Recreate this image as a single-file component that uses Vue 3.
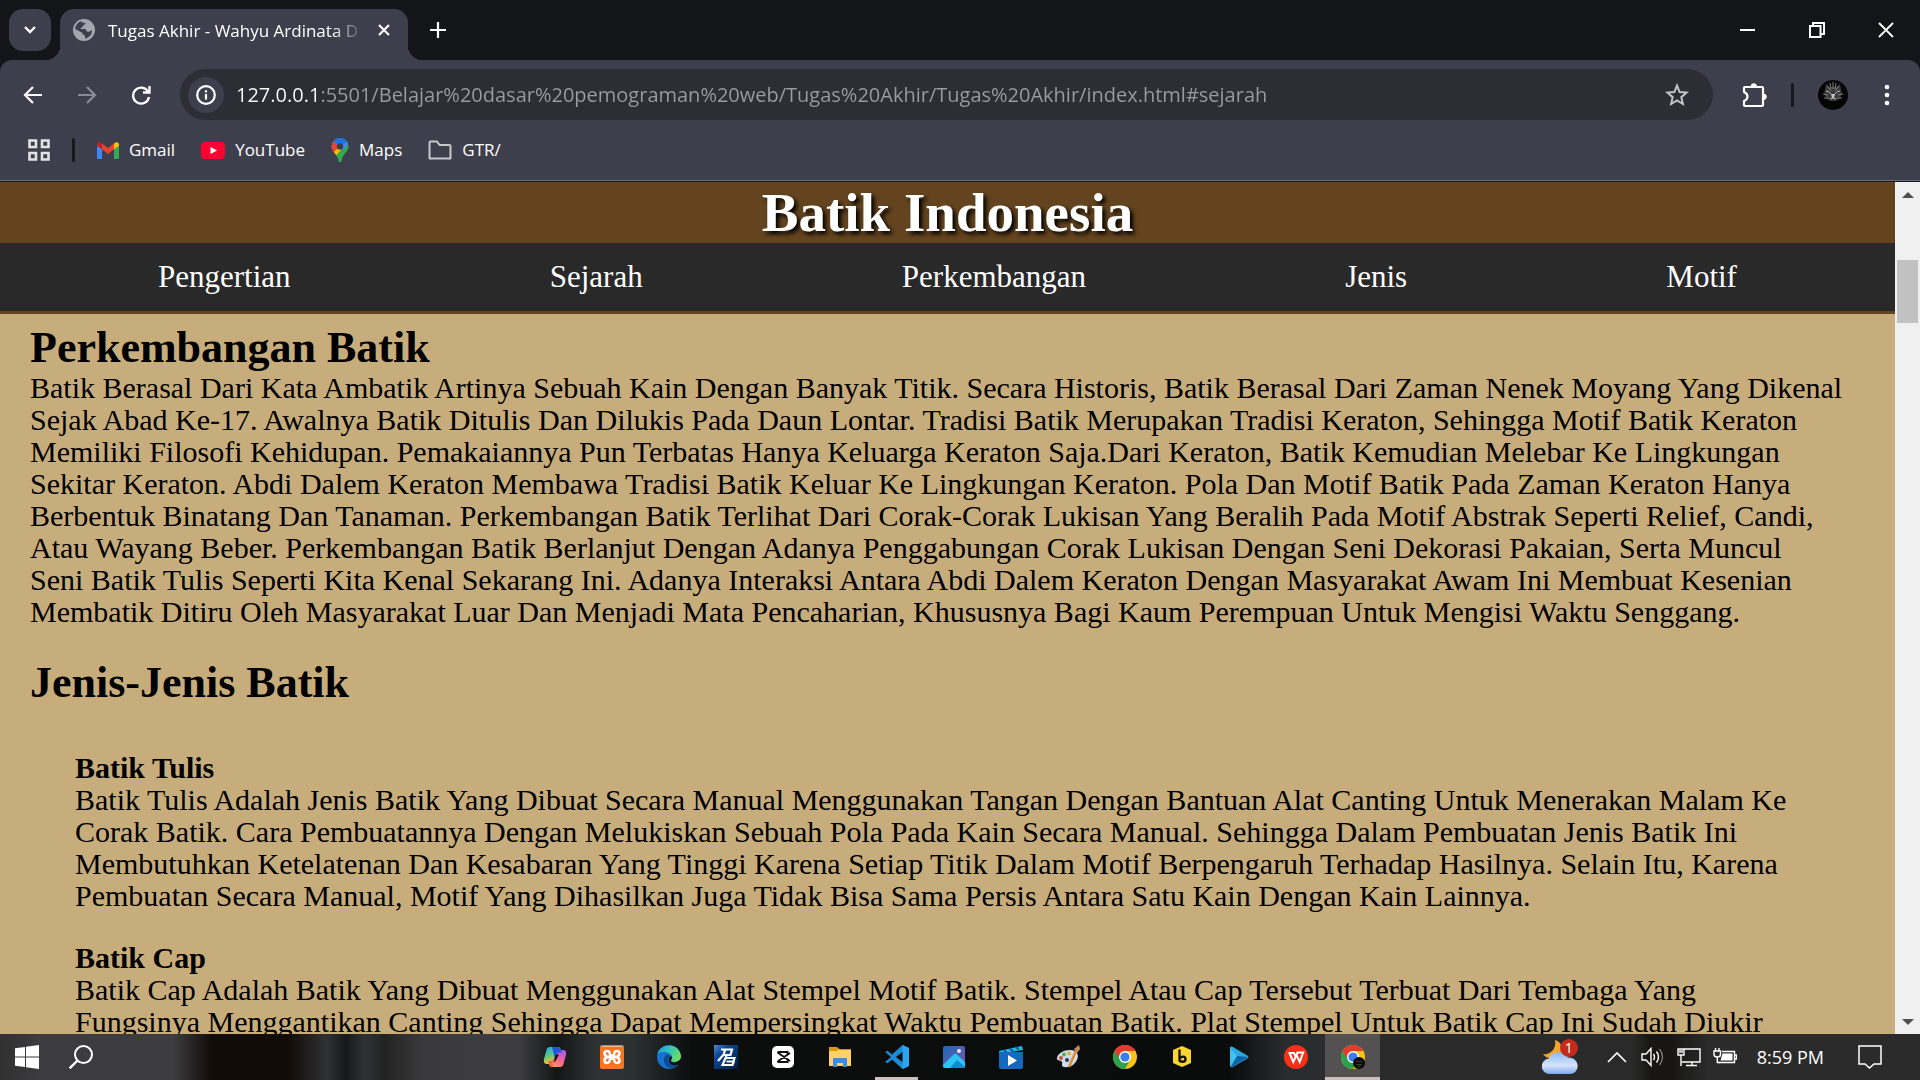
<script setup>
import { ref } from 'vue'

const url = ref('127.0.0.1:5501/Belajar%20dasar%20pemograman%20web/Tugas%20Akhir/Tugas%20Akhir/index.html#sejarah')

const menu = ['Pengertian', 'Sejarah', 'Perkembangan', 'Jenis', 'Motif']

const perkembangan = [
  'Batik Berasal Dari Kata Ambatik Artinya Sebuah Kain Dengan Banyak Titik. Secara Historis, Batik Berasal Dari Zaman Nenek Moyang Yang Dikenal',
  'Sejak Abad Ke-17. Awalnya Batik Ditulis Dan Dilukis Pada Daun Lontar. Tradisi Batik Merupakan Tradisi Keraton, Sehingga Motif Batik Keraton',
  'Memiliki Filosofi Kehidupan. Pemakaiannya Pun Terbatas Hanya Keluarga Keraton Saja.Dari Keraton, Batik Kemudian Melebar Ke Lingkungan',
  'Sekitar Keraton. Abdi Dalem Keraton Membawa Tradisi Batik Keluar Ke Lingkungan Keraton. Pola Dan Motif Batik Pada Zaman Keraton Hanya',
  'Berbentuk Binatang Dan Tanaman. Perkembangan Batik Terlihat Dari Corak-Corak Lukisan Yang Beralih Pada Motif Abstrak Seperti Relief, Candi,',
  'Atau Wayang Beber. Perkembangan Batik Berlanjut Dengan Adanya Penggabungan Corak Lukisan Dengan Seni Dekorasi Pakaian, Serta Muncul',
  'Seni Batik Tulis Seperti Kita Kenal Sekarang Ini. Adanya Interaksi Antara Abdi Dalem Keraton Dengan Masyarakat Awam Ini Membuat Kesenian',
  'Membatik Ditiru Oleh Masyarakat Luar Dan Menjadi Mata Pencaharian, Khususnya Bagi Kaum Perempuan Untuk Mengisi Waktu Senggang.',
]

const jenis = [
  {
    name: 'Batik Tulis',
    lines: [
      'Batik Tulis Adalah Jenis Batik Yang Dibuat Secara Manual Menggunakan Tangan Dengan Bantuan Alat Canting Untuk Menerakan Malam Ke',
      'Corak Batik. Cara Pembuatannya Dengan Melukiskan Sebuah Pola Pada Kain Secara Manual. Sehingga Dalam Pembuatan Jenis Batik Ini',
      'Membutuhkan Ketelatenan Dan Kesabaran Yang Tinggi Karena Setiap Titik Dalam Motif Berpengaruh Terhadap Hasilnya. Selain Itu, Karena',
      'Pembuatan Secara Manual, Motif Yang Dihasilkan Juga Tidak Bisa Sama Persis Antara Satu Kain Dengan Kain Lainnya.',
    ],
  },
  {
    name: 'Batik Cap',
    lines: [
      'Batik Cap Adalah Batik Yang Dibuat Menggunakan Alat Stempel Motif Batik. Stempel Atau Cap Tersebut Terbuat Dari Tembaga Yang',
      'Fungsinya Menggantikan Canting Sehingga Dapat Mempersingkat Waktu Pembuatan Batik. Plat Stempel Untuk Batik Cap Ini Sudah Diukir',
    ],
  },
]
</script>

<template>
  <div class="screen">
    <header class="tabstrip">
      <button class="tab-search" aria-label="Search tabs">
        <svg width="14" height="10" viewBox="0 0 14 10"><path d="M2 2l5 5 5-5" fill="none" stroke="#fff" stroke-width="2.4" /></svg>
      </button>
      <div class="tab">
        <svg class="globe" width="22" height="22" viewBox="0 0 22 22">
          <circle cx="11" cy="11" r="11" fill="#a2a7ae" />
          <path d="M8 2.2c1 2 4.500 1 4.500 2.300 0 1.500-2.500 1-2.500 2.500s-2.500 1.500-2.500 3H12c1.500 0 1.500 3 3 3s1.500-1.500 4-1.500c0 4-3 7.500-7 8v-3c-1.500 0-2.500-1-2.500-2.500L2.200 10C2.500 6 5 3 8 2.200z" fill="#3e3f4c" />
        </svg>
        <span class="tab-title">Tugas Akhir - Wahyu Ardinata D</span>
        <button class="tab-close" aria-label="Close tab">
          <svg width="14" height="14" viewBox="0 0 14 14"><path d="M2 2l10 10M12 2L2 12" stroke="#fff" stroke-width="2.200" /></svg>
        </button>
      </div>
      <button class="new-tab" aria-label="New tab">
        <svg width="18" height="18" viewBox="0 0 18 18"><path d="M9 1v16M1 9h16" stroke="#fff" stroke-width="2.200" /></svg>
      </button>
      <div class="window-controls">
        <button aria-label="Minimize"><svg width="15" height="16" viewBox="0 0 15 16"><path d="M0 8h15" stroke="#fff" stroke-width="2" /></svg></button>
        <button aria-label="Restore"><svg width="16" height="16" viewBox="0 0 16 16"><path d="M1 4h10.500v11H1zM4 4V1h11v11h-3.500" fill="none" stroke="#fff" stroke-width="2" /></svg></button>
        <button aria-label="Close"><svg width="16" height="16" viewBox="0 0 16 16"><path d="M1 1l14 14M15 1L1 15" stroke="#fff" stroke-width="1.800" /></svg></button>
      </div>
    </header>

    <div class="browser-bars">
      <div class="toolbar">
        <button class="tool" aria-label="Back"><svg width="20" height="20" viewBox="0 0 20 20"><path d="M19 10H2M10 2l-8 8 8 8" fill="none" stroke="#fff" stroke-width="2.200" /></svg></button>
        <button class="tool" aria-label="Forward"><svg width="20" height="20" viewBox="0 0 20 20"><path d="M1 10h17M10 2l8 8-8 8" fill="none" stroke="#8b8c94" stroke-width="2.200" /></svg></button>
        <button class="tool" aria-label="Reload"><svg width="20" height="20" viewBox="0 0 20 20"><path d="M17 6.500A8 8 0 1 0 18 12M18.500 1v6.500H12" fill="none" stroke="#fff" stroke-width="2.300" /></svg></button>
        <div class="omnibox">
          <button class="site-info" aria-label="Site information">
            <svg width="20" height="20" viewBox="0 0 20 20"><circle cx="10" cy="10" r="8.800" fill="none" stroke="#fff" stroke-width="2.200" /><path d="M10 9v5.500M10 5.300v2.200" stroke="#fff" stroke-width="2.200" /></svg>
          </button>
          <input v-model="url" class="address" type="text" aria-label="Address" spellcheck="false" />
          <button class="star" aria-label="Bookmark">
            <svg width="24" height="24" viewBox="0 0 24 24"><path d="M12 2.500l2.600 6.500 7 .6-5.300 4.600 1.600 6.800-5.900-3.600L6.100 21l1.600-6.800L2.400 9.600l7-.6z" fill="none" stroke="#c4c4c8" stroke-width="2" /></svg>
          </button>
        </div>
        <button class="extensions" aria-label="Extensions">
          <svg width="26" height="26" viewBox="0 0 26 26"><path d="M4 5h17q1 0 1 1v17q0 1-1 1H4q-1 0-1-1v-4q3.500-1.500 3.500-4.500T3 10V6q0-1 1-1z" fill="none" stroke="#fff" stroke-width="2.200" stroke-linejoin="round" /><path d="M10 4.500a2.800 2.800 0 0 1 5.600 0zM22.500 12a2.800 2.800 0 0 1 0 5.600z" fill="#fff" stroke="#fff" /></svg>
        </button>
        <span class="divider"></span>
        <button class="avatar" aria-label="Profile">
          <svg width="30" height="30" viewBox="0 0 30 30">
            <circle cx="15" cy="15" r="15" fill="#050505" />
            <path d="M7 9l1-5 4 3h6l4-3 1 5 1 5-3 5-3 2h-6l-3-2-3-5z" fill="#3a3a3a" />
            <path d="M12 3l1 6M18 3l-1 6M15 2v7M9 6l4 5M21 6l-4 5M5 14l5 1M25 14l-5 1M6 18l5 0M24 18l-5 0" fill="none" stroke="#808080" />
            <path d="M8 11q3 0 5 3M22 11q-3 0-5 3M12 19l3-1 3 1" fill="none" stroke="#bdbdbd" />
            <path d="M13 14h4l-1 4h-2z" fill="#c5c5c5" />
          </svg>
        </button>
        <button class="more" aria-label="Menu"><svg width="6" height="24" viewBox="0 0 6 24"><g fill="#fff"><circle cx="3" cy="4" r="2.300" /><circle cx="3" cy="12" r="2.300" /><circle cx="3" cy="20" r="2.300" /></g></svg></button>
      </div>
      <nav class="bookmarks" aria-label="Bookmarks">
        <button class="apps" aria-label="Apps"><svg width="22" height="22" viewBox="0 0 22 22"><path d="M1.500 1.500h6.500v6.500H1.500zM14 1.500h6.500v6.500H14zM1.500 14h6.500v6.500H1.500zM14 14h6.500v6.500H14z" fill="none" stroke="#e3e3e6" stroke-width="2.600" /></svg></button>
        <span class="divider"></span>
        <a href="#" class="bookmark">
          <svg width="22" height="17" viewBox="0 0 22 17"><path d="M0 3v12.500Q0 17 1.500 17H5V6.500z" fill="#4285f4" /><path d="M22 3v12.500q0 1.500-1.500 1.500H17V6.500z" fill="#34a853" /><path d="M5 1.500l6 4.500 6-4.500v5.800L11 12 5 7.300z" fill="#ea4335" /><path d="M0 3q0-3 3-2.700l2 1.200v5.800L0 4z" fill="#c5221f" /><path d="M22 3q0-3-3-2.700l-2 1.200v5.800L22 4z" fill="#fbbc04" /></svg>
          Gmail
        </a>
        <a href="#" class="bookmark">
          <svg width="24" height="17" viewBox="0 0 24 17"><rect width="24" height="17" rx="4" fill="#ff0033" /><path d="M9.500 5v7l6.500-3.500z" fill="#fff" /></svg>
          YouTube
        </a>
        <a href="#" class="bookmark maps">
          <svg width="18" height="24" viewBox="0 0 18 24">
            <defs><clipPath id="pin"><path d="M9 0a8.500 8.500 0 0 1 8.500 8.500c0 5-5.500 7-7 14q-.5 2-1.500 2t-1.500-2C6 15.500.5 13.500.5 8.500A8.500 8.500 0 0 1 9 0z" /></clipPath></defs>
            <g clip-path="url(#pin)"><path fill="#34a853" d="M0 0h18v24H0z" /><path fill="#fbbc04" d="M0 16L12 2l4 3L3 20z" /><path fill="#4285f4" d="M9 8L18 0v5l-6 7z" /><path fill="#ea4335" d="M0 2l9 6-8 8-5-5z" /><path fill="#1a73e8" d="M2 3l7-5 9 1-1 4-8 5z" /></g>
            <circle cx="9" cy="8.500" r="3.200" fill="#3e3f4c" />
          </svg>
          Maps
        </a>
        <a href="#" class="bookmark folder">
          <svg width="24" height="20" viewBox="0 0 24 20"><path d="M1.500 18.500v-16q0-1 1-1H9L11.500 5h10q1 0 1 1v12.500z" fill="none" stroke="#c8c8cc" stroke-width="2" stroke-linejoin="round" /></svg>
          GTR/
        </a>
      </nav>
    </div>

    <div class="viewport">
      <main class="page">
        <div class="page-head">
          <h1>Batik Indonesia</h1>
          <nav class="menu" aria-label="Menu">
            <a v-for="item in menu" :key="item" :href="'#' + item.toLowerCase()">{{ item }}</a>
          </nav>
        </div>
        <section>
          <h2>Perkembangan Batik</h2>
          <p><span v-for="line in perkembangan" :key="line" class="line">{{ line }}</span></p>
        </section>
        <section>
          <h2>Jenis-Jenis Batik</h2>
          <article v-for="kind in jenis" :key="kind.name">
            <h3>{{ kind.name }}</h3>
            <p><span v-for="line in kind.lines" :key="line" class="line">{{ line }}</span></p>
          </article>
        </section>
      </main>
      <div class="scrollbar">
        <svg width="12" height="6" viewBox="0 0 12 6"><path d="M0 6l6-6 6 6z" fill="#505050" /></svg>
        <div class="track"><div class="thumb"></div></div>
        <svg width="12" height="6" viewBox="0 0 12 6"><path d="M0 0h12L6 6z" fill="#505050" /></svg>
      </div>
    </div>

    <footer class="taskbar">
      <div class="launch">
        <button aria-label="Start"><svg width="24" height="24" viewBox="0 0 24 24"><path d="M0 3.300L10 2v9.500H0zM11 1.800L24 0v11.500H11zM0 12.500h10V22L0 20.700zM11 12.500h13V24l-13-1.800z" fill="#fff" /></svg></button>
        <button aria-label="Search"><svg width="24" height="24" viewBox="0 0 24 24"><circle cx="14.500" cy="9.500" r="8.500" fill="none" stroke="#fff" stroke-width="2" /><path d="M8.500 15.500L.7 23.300" stroke="#fff" stroke-width="2.400" /></svg></button>
      </div>
      <div class="apps-row">
        <button class="app" aria-label="Copilot">
          <svg width="24" height="24" viewBox="0 0 24 24">
            <defs>
              <linearGradient id="co1" x1="0" y1="0" x2="0.300" y2="1"><stop offset="0" stop-color="#25a7ed" /><stop offset=".5" stop-color="#56c58c" /><stop offset="1" stop-color="#f4c928" /></linearGradient>
              <linearGradient id="co2" x1="0.800" y1="0" x2="0.300" y2="1"><stop offset="0" stop-color="#a35af0" /><stop offset=".5" stop-color="#f0609d" /><stop offset="1" stop-color="#fb9852" /></linearGradient>
            </defs>
            <path d="M7 2h8q2 0 2.600 2L19 7.500h-3q-2 0-2.700 2.500L11 17q-.7 2-3 2H4q-4 0-3-5l2.500-9Q4.300 2 7 2z" fill="url(#co1)" />
            <path d="M17 22H9q-2 0-2.600-2L5.500 17H8q2 0 2.700-2.500L13 7q.7-2 3-2h4q4 0 3 5l-2.500 9q-.8 3-3.500 3z" fill="url(#co2)" />
            <path d="M9 2h6q2 0 2.600 2L19 7.500h-3q-2 0-2.700 2.500L12 14z" fill="#2257d5" /><path d="M11 13l-1.500 5q-.5 4 1.500 4H9q-2 0-2.600-2L5 16h3q2 0 3-3z" fill="#f0673d" /><path d="M13 9.500h3l-3.500 6.500-2 1z" fill="#101112" />
          </svg>
        </button>
        <button class="app" aria-label="XAMPP"><svg width="24" height="24" viewBox="0 0 24 24"><rect width="24" height="24" rx="2" fill="#f37623" /><path d="M2 1.500h20" stroke="#ffb27a" /><path d="M9.800 9Q9.800 6 7 6T4.500 8.500 7.500 12q-3 1-3 3.500T7 18t2.800-3M14.200 9q0-3 2.800-3t2.500 2.500-3 3.500q3 1 3 3.500T17 18t-2.800-3M8 12h8M9.800 9q0 1.500 2.200 1.500T14.200 9M9.800 15q0-1.500 2.200-1.500t2.200 1.500" fill="none" stroke="#fff" stroke-width="2.500" stroke-linecap="round" /></svg></button>
        <button class="app" aria-label="Edge">
          <svg width="24" height="24" viewBox="0 0 24 24">
            <defs><linearGradient id="ed" x1="0" y1=".2" x2="1" y2=".5"><stop offset="0" stop-color="#239bdc" /><stop offset=".5" stop-color="#35c4b8" /><stop offset="1" stop-color="#6ee05a" /></linearGradient></defs>
            <circle cx="12" cy="12" r="12" fill="#1673cd" /><path d="M.4 9C3-2 21-3 23.800 10c.8 4-2 7-6 7-3 0-4.500-1-3.500-2.500 1-1.300 1-4-1-5.500C9 6 3 7 .4 9z" fill="url(#ed)" /><path d="M8 11c-3 5 0 11 6 12.500 3-.5 6-2 8-5-4 2-9 1.500-10.500-2-1-2.500.5-4 2-4.500-1-2.500-4-3-5.500-1z" fill="#0e4b92" /><path d="M14 11c1.500 1.500 1 3 0 4-.8 2 2 3 5 2 1.500-.5 3-1.300 5-3.300v5l-3 1c-4 1.500-8 .3-9-3.200-.7-2.500.5-4.500 2-5.500z" fill="#101314" />
          </svg>
        </button>
        <button class="app" aria-label="Point Blank">
          <svg width="24" height="24" viewBox="0 0 24 24">
            <defs><linearGradient id="pb" x1="0" y1="0" x2="1" y2="1"><stop offset="0" stop-color="#4d8ad0" /><stop offset=".3" stop-color="#0b4796" /><stop offset="1" stop-color="#011b3e" /></linearGradient></defs>
            <path d="M0 0h24v24H0z" fill="url(#pb)" /><path d="M7 4.500h11l-1.500 5.500H9M11 5l-1.300 4.500L4 16M12 13h8.500l-1 3.500h-7M20 16l-1.500 4H8.500l4-9" fill="none" stroke="#fff" stroke-width="2.200" />
          </svg>
        </button>
        <button class="app" aria-label="CapCut"><svg width="22" height="22" viewBox="0 0 22 22"><rect width="22" height="22" rx="5" fill="#fff" /><path d="M18 7L7 14.500q-2 1.500 0 1.500h8.500v-1.700M18 15L7 7.500Q5 6 7 6h8.500v1.700" fill="none" stroke="#111" stroke-width="2" /></svg></button>
        <button class="app" aria-label="File Explorer"><svg width="24" height="20" viewBox="0 0 24 20"><path d="M1 0h8l3 2.500h11V9H1z" fill="#d99b08" /><path d="M1 4h8l2-1.500h12V19H1z" fill="#ffd363" /><path d="M5 20v-8q0-1 1-1h12q1 0 1 1v8h-4v-4H9v4z" fill="#3c8fdc" /></svg></button>
        <button class="app" aria-label="Visual Studio Code"><svg width="24" height="24" viewBox="0 0 24 24"><path d="M17.500 0L24 3v18l-6.500 3L7 14.500l-4.500 3.700L0 17l6-5-6-5 2.500-1.200L7 9.500zM18 6.500L11 12l7 5.500z" fill="#1a8ad6" /><path d="M17.500 0L24 3v18l-6.500 3z" fill="#2aa5f2" /></svg><i class="running"></i></button>
        <button class="app" aria-label="Photos">
          <svg width="22" height="22" viewBox="0 0 22 22"><defs><linearGradient id="ph" x1="0" y1="0" x2="1" y2="1"><stop offset="0" stop-color="#1e68b8" /><stop offset="1" stop-color="#7e55ae" /></linearGradient><clipPath id="phc"><rect width="22" height="22" rx="2" /></clipPath></defs><g clip-path="url(#phc)"><path d="M0 0h22v22H0z" fill="url(#ph)" /><path d="M-1 20L11 8q2-1 3.500 1L24 18v5H0z" fill="#2cc4f2" /><path d="M7 22l7-8 9 8z" fill="#1287d2" /></g><circle cx="16" cy="5" r="2" fill="#e9eefc" /></svg>
        </button>
        <button class="app" aria-label="Movies"><svg width="24" height="24" viewBox="0 0 24 24"><path d="M0 6l23-5 1 4L0 9z" fill="#20b7e7" /><path d="M5 5l3 3M11 3.500l3 3M17 2l3 3" stroke="#075d9e" stroke-width="2" /><path d="M0 7h24v15q0 2-2 2H2q-2 0-2-2z" fill="#1369c0" /><path d="M9 10v11l9-5.500z" fill="#fff" /></svg></button>
        <button class="app" aria-label="Paint"><svg width="24" height="24" viewBox="0 0 24 24"><path d="M1 13C2 7 12 3 19 6c5 3 3 10-2 14-5 3-11 3-11 0 0-2 1-3-1-4s-5-1-4-3z" fill="#c9dff0" /><circle cx="5" cy="13" r="2" fill="#d84a3b" /><circle cx="8" cy="9.500" r="2" fill="#55ae4b" /><circle cx="13" cy="8.500" r="2" fill="#e6ad2d" /><circle cx="11" cy="15" r="2" fill="#283c4a" /><path d="M13 22L20 6" stroke="#e78831" stroke-width="2.500" /><path d="M18 4l5-4 1 4-3 4z" fill="#c18e5b" /></svg></button>
        <button class="app" aria-label="Chrome"><svg width="24" height="24" viewBox="0 0 24 24"><circle cx="12" cy="12" r="12" fill="#fbc116" /><path d="M12 12L1.600 6A12 12 0 0 0 12 24l5.200-9z" fill="#2ba24c" /><path d="M1.600 6A12 12 0 0 1 22.400 6H12z" fill="#e33b2e" /><path d="M1.600 6L12 6v6H5z" fill="#e33b2e" /><circle cx="12" cy="12" r="6" fill="#fff" /><circle cx="12" cy="12" r="4.600" fill="#3b7ded" /></svg></button>
        <button class="app" aria-label="Bandicam"><svg width="20" height="22" viewBox="0 0 20 22"><path d="M10 0l9 4v13l-9 4-9-4V4z" fill="#fdd62d" /><path d="M7.500 3.500v10.300q0 2 3 2t3-2.600-2.500-2.600q-2 0-3.500 2" fill="none" stroke="#111" stroke-width="2.400" /></svg></button>
        <button class="app" aria-label="Media player"><svg width="20" height="22" viewBox="0 0 20 22"><path d="M1 1q1-1 3 0l15 9q1 1 0 2L3 21.500q-2 0-2-2z" fill="#2aa8df" /><path d="M2 21L8 10l11 1-16 10z" fill="#0f62a8" /><path d="M1 2l7 8-7 10z" fill="#41c3f0" /></svg></button>
        <button class="app" aria-label="WPS Office"><svg width="24" height="24" viewBox="0 0 24 24"><circle cx="12" cy="12" r="12" fill="#fa2f17" /><path d="M4.500 8H10l2.200 5M5.500 8l3.800 9 4.200-9.500h5.700l-3.500 9.500-3-6.500" fill="none" stroke="#fff" stroke-width="2" /></svg></button>
        <button class="app active" aria-label="Chrome, profile window"><svg width="24" height="24" viewBox="0 0 24 24"><circle cx="12" cy="12" r="12" fill="#fbc116" /><path d="M12 12L1.600 6A12 12 0 0 0 12 24l5.200-9z" fill="#2ba24c" /><path d="M1.600 6A12 12 0 0 1 22.400 6H12z" fill="#e33b2e" /><path d="M1.600 6L12 6v6H5z" fill="#e33b2e" /><circle cx="12" cy="12" r="6" fill="#fff" /><circle cx="12" cy="12" r="4.600" fill="#3b7ded" /><circle cx="18" cy="18" r="6" fill="#090909" /><path d="M14.500 16l7 1M15 19.500h6M16.500 21.500h3" stroke="#3f3f3f" /></svg><i class="running"></i></button>
      </div>
      <div class="tray">
        <button class="weather" aria-label="Weather">
          <svg width="36" height="36" viewBox="0 0 36 36"><defs><linearGradient id="cl" x1="0" y1="0" x2="0" y2="1"><stop offset="0" stop-color="#8fb9f7" /><stop offset=".6" stop-color="#d4e4fb" /><stop offset="1" stop-color="#82a7ee" /></linearGradient></defs><path d="M13 1c7 2 9 10 4 15-5 5-13 4-16-1 6 1 14-4 12-14z" fill="#f7a52a" /><path d="M8 35a7.500 7.500 0 0 1-1-15.500C8 13 22 10 26 18.500c13 0 12 16.500 2 16.500z" fill="url(#cl)" /></svg>
          <span class="badge">1</span>
        </button>
        <button class="chevron" aria-label="Hidden icons"><svg width="20" height="12" viewBox="0 0 20 12"><path d="M1 11l9-9 9 9" fill="none" stroke="#fff" stroke-width="1.600" /></svg></button>
        <button aria-label="Volume"><svg width="24" height="20" viewBox="0 0 24 20"><path d="M1 7h4l5-5.500v17L5 13H1zM12.500 7q2 3 0 6M15.500 4.500q4 5.500 0 11" fill="none" stroke="#fff" stroke-width="1.400" /><path d="M18.500 2q6 8 0 16" fill="none" stroke="#777" stroke-width="1.400" /></svg></button>
        <button aria-label="Network"><svg width="24" height="20" viewBox="0 0 24 20"><path d="M7 2h16v13H5M1 2h6v6H1zM4 8v11M15 15v3M9 18.500h11M3 3v3M5 3v3" fill="none" stroke="#fff" stroke-width="1.400" /></svg></button>
        <button aria-label="Battery"><svg width="24" height="20" viewBox="0 0 24 20"><path d="M9 4.500h12.500v11H6M22 8h1.500v4H22" fill="none" stroke="#fff" stroke-width="1.400" /><path d="M9.500 6.500h10v7H7.500z" fill="#fff" /><path d="M1 4h6.500v3.500q0 2.500-3.200 2.500T1 7.500zM2.500 1v3M6 1v3M4.300 10v5.500H7" fill="none" stroke="#fff" stroke-width="1.400" /></svg></button>
        <time>8:59 PM</time>
        <button class="notify" aria-label="Notifications"><svg width="24" height="24" viewBox="0 0 24 24"><path d="M1 1h22v18h-7l-4.500 4L7 19H1z" fill="none" stroke="#fff" stroke-width="1.500" /></svg></button>
      </div>
    </footer>
  </div>
</template>

<style>
body {
  margin: 0;
}
</style>

<style scoped>
.screen {
  display: flex;
  flex-direction: column;
  height: 100vh;
  overflow: hidden;
  background: #141519;
  font-family: "Open Sans", "Noto Sans", sans-serif;
  color: #fff;
}
button {
  display: flex;
  align-items: center;
  justify-content: center;
  flex: none;
  margin: 0;
  padding: 0;
  border: 0;
  background: none;
  color: inherit;
  font: inherit;
}
svg {
  display: block;
  flex: none;
}

/* Tab strip */
.tabstrip {
  display: flex;
  flex: none;
  height: 60px;
}
.tab-search {
  width: 42px;
  height: 42px;
  margin: 9px 9px 0;
  border-radius: 14px;
  background: #3e3f4c;
}
.tab {
  position: relative;
  display: flex;
  align-items: center;
  box-sizing: border-box;
  width: 348px;
  margin-top: 9px;
  padding: 0 17px 9px 13px;
  border-radius: 14px 14px 0 0;
  background: #3e3f4c;
}
.tab::before,
.tab::after {
  content: "";
  position: absolute;
  bottom: 0;
  width: 14px;
  height: 14px;
}
.tab::before {
  right: 100%;
  background: radial-gradient(circle at 0 0, transparent 14px, #3e3f4c 14px);
}
.tab::after {
  left: 100%;
  background: radial-gradient(circle at 100% 0, transparent 14px, #3e3f4c 14px);
}
.tab-title {
  flex: 1;
  margin: 2px 14px 0 13px;
  overflow: hidden;
  font-size: 17px;
  line-height: 28px;
  white-space: nowrap;
  mask-image: linear-gradient(90deg, #000 88%, transparent);
}
.new-tab {
  width: 60px;
  height: 60px;
}
.window-controls {
  display: flex;
  margin-left: auto;
}
.window-controls button {
  width: 69px;
  height: 60px;
}

/* Toolbar and bookmarks */
.browser-bars {
  flex: none;
  border-bottom: 1px solid #17181c;
  border-radius: 12px 12px 0 0;
  background: #3e3f4c;
}
.toolbar {
  display: flex;
  align-items: center;
  height: 69px;
  padding: 0 18px 0 6px;
}
.tool {
  width: 54px;
  height: 51px;
}
.tool + .omnibox {
  margin-left: 12px;
}
.omnibox {
  display: flex;
  flex: 1;
  align-items: center;
  height: 51px;
  padding: 0 24px 0 8px;
  border-radius: 26px;
  background: #2d2d36;
}
.site-info {
  width: 36px;
  height: 36px;
  border-radius: 18px;
  background: #3e3f4c;
}
.address {
  flex: 1;
  min-width: 0;
  height: 36px;
  margin: 0 12px;
  padding: 0;
  border: 0;
  outline: 0;
  background: linear-gradient(90deg, #fff 83px, #9b9ba2 83px);
  background-clip: text;
  color: transparent;
  font: 20px "Open Sans", "Noto Sans", sans-serif;
}
.extensions {
  margin: 0 24px 0 28px;
}
.divider {
  flex: none;
  width: 3px;
  height: 24px;
  border-radius: 2px;
  background: #17181c;
}
.avatar {
  margin: 0 36px 0 24px;
}
.more {
  width: 36px;
  margin: 0 -3px 0 -15px;
}
.bookmarks {
  display: flex;
  align-items: center;
  box-sizing: border-box;
  height: 52px;
  padding: 0 28px 9px;
  border-bottom: 1px solid #6c6f78;
}
.apps {
  margin-right: 22px;
}
.bookmark {
  display: flex;
  align-items: center;
  gap: 10px;
  margin-left: 26px;
  color: #fff;
  font-size: 17px;
  line-height: 28px;
  text-decoration: none;
}
.divider + .bookmark {
  margin-left: 22px;
}

/* Web page */
.viewport {
  display: flex;
  flex: 1;
  min-height: 0;
  background: #f0f0f0;
}
.page {
  flex: 1;
  min-width: 0;
  overflow: hidden;
  background: #c8ad7c;
  color: #000;
  font: 30px/32px "Liberation Serif", "Times New Roman", serif;
}
.page-head {
  border-bottom: 3px solid #64441f;
}
h1 {
  margin: 0;
  background: #64441f;
  color: #fff;
  font-size: 55px;
  line-height: 61px;
  text-align: center;
  text-shadow: 3px 3px 4px #000;
}
.menu {
  display: flex;
  align-items: center;
  justify-content: space-between;
  height: 68px;
  padding: 0 158px;
  background: #292929;
}
.menu a {
  color: #fff;
  font-size: 31px;
  text-decoration: none;
}
section {
  padding: 10px 30px 21px;
}
h2 {
  margin: 0;
  font-size: 44px;
  line-height: 48px;
}
h3,
p {
  margin: 0;
}
h3 {
  font-size: 30px;
  line-height: 32px;
}
article {
  padding: 30px 45px 0;
}
h2 + article {
  padding-top: 45px;
}
.line {
  display: block;
  white-space: nowrap;
}
.scrollbar {
  display: flex;
  flex: none;
  flex-direction: column;
  align-items: center;
  box-sizing: border-box;
  width: 25px;
  padding: 10px 2px 9px;
}
.track {
  flex: 1;
  width: 21px;
}
.thumb {
  height: 63px;
  margin-top: 62px;
  background: #c1c1c1;
}

/* Taskbar */
.taskbar {
  display: flex;
  flex: none;
  align-items: center;
  height: 46px;
  background: linear-gradient(90deg, #303031 0, #3c3c3e 2%, #3d3d3f 9%, #120c09 11%, #120b08 15%, #303133 17%, #17181a 18%, #303133 19%, #222 20%, #3a3a3c 22%, #3d3d3f 27%, #151616 29%, #2e3233 31%, #2b3030 33%, #0c0e0e 36%, #0a0b0b 64%, #2a2d2f 67%, #2a2a2b 72%, #2a2a2a 85%, #171615 86%, #171615 87%, #2b2b2b 89%, #2b2b2b 100%);
}
.launch {
  display: flex;
  flex: 1 1 0;
  gap: 30px;
  padding-left: 15px;
}
.apps-row {
  display: flex;
  gap: 2px;
  padding-left: 10px;
}
.app {
  position: relative;
  width: 55px;
  height: 46px;
}
.running {
  position: absolute;
  bottom: 0;
  width: 43px;
  height: 3px;
  background: #cbbfbf;
}
.app.active {
  background: #535151;
}
.app.active .running {
  width: 55px;
}
.tray {
  display: flex;
  flex: 1 1 0;
  align-items: center;
  justify-content: flex-end;
  gap: 12px;
  padding-right: 38px;
}
.weather {
  position: relative;
  margin-right: 17px;
}
.badge {
  position: absolute;
  top: 0;
  right: 0;
  width: 18px;
  height: 18px;
  border-radius: 9px;
  background: #c42b1c;
  font-size: 14px;
  line-height: 18px;
}
.chevron {
  margin-right: 2px;
}
time {
  margin: 0 22px 0 8px;
  font-size: 18px;
  line-height: 24px;
}
</style>
